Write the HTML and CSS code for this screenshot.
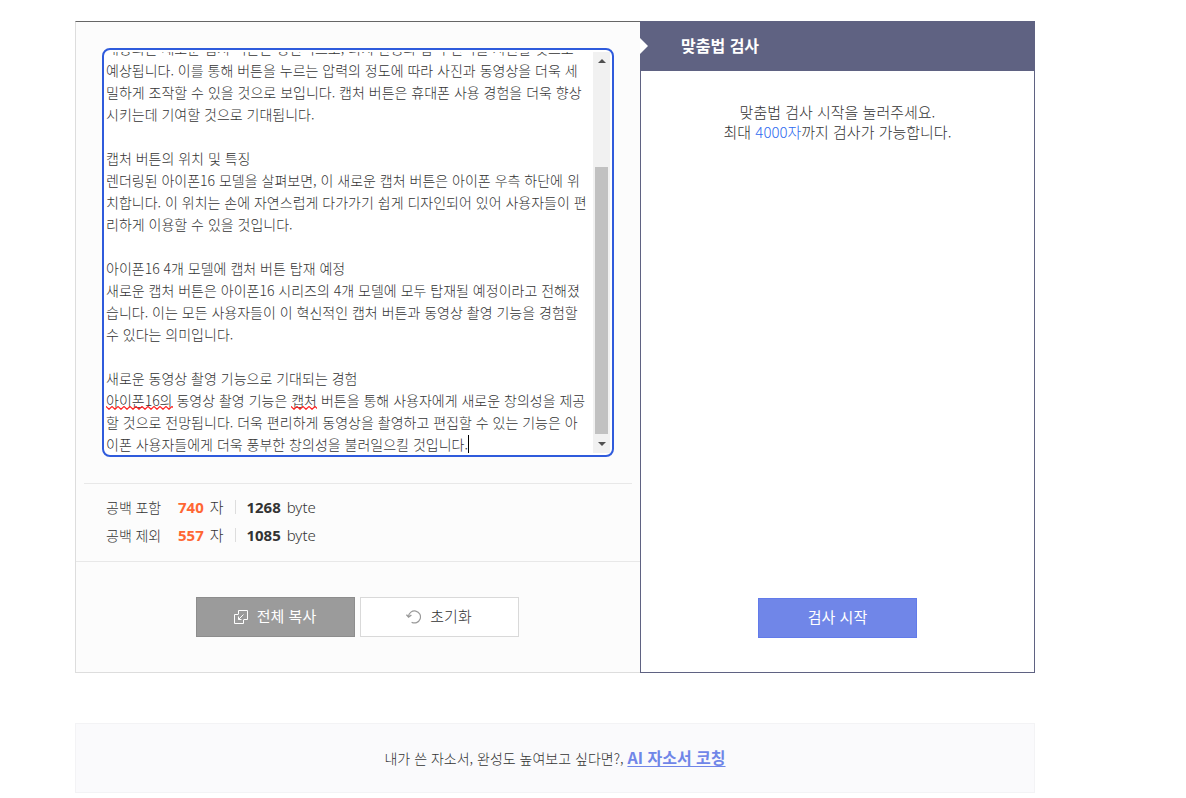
FILE: index.html
```html
<!DOCTYPE html>
<html lang="ko">
<head>
    <meta charset="UTF-8">
    <meta name="viewport" content="width=device-width, initial-scale=1">
    <title>맞춤법 검사</title>
    <link rel="stylesheet" href="styles.css">
</head>
<body>
    <main class="wrap">
        <div class="checker">
            <section class="write">
                <div class="editor">
                    <textarea class="editor-input" id="content" aria-label="내용" spellcheck="false" wrap="off">






내장되는 새로운 캡처 버튼은 정전식으로, 터치 반응과 압력 인식을 지원할 것으로
예상됩니다. 이를 통해 버튼을 누르는 압력의 정도에 따라 사진과 동영상을 더욱 세
밀하게 조작할 수 있을 것으로 보입니다. 캡처 버튼은 휴대폰 사용 경험을 더욱 향상
시키는데 기여할 것으로 기대됩니다.

캡처 버튼의 위치 및 특징
렌더링된 아이폰16 모델을 살펴보면, 이 새로운 캡처 버튼은 아이폰 우측 하단에 위
치합니다. 이 위치는 손에 자연스럽게 다가가기 쉽게 디자인되어 있어 사용자들이 편
리하게 이용할 수 있을 것입니다.

아이폰16 4개 모델에 캡처 버튼 탑재 예정
새로운 캡처 버튼은 아이폰16 시리즈의 4개 모델에 모두 탑재될 예정이라고 전해졌
습니다. 이는 모든 사용자들이 이 혁신적인 캡처 버튼과 동영상 촬영 기능을 경험할
수 있다는 의미입니다.

새로운 동영상 촬영 기능으로 기대되는 경험
아이폰16의 동영상 촬영 기능은 캡처 버튼을 통해 사용자에게 새로운 창의성을 제공
할 것으로 전망됩니다. 더욱 편리하게 동영상을 촬영하고 편집할 수 있는 기능은 아
이폰 사용자들에게 더욱 풍부한 창의성을 불러일으킬 것입니다.</textarea>
                    <div class="editor-marks" id="marks" aria-hidden="true"></div>
                    <div class="scrollbar" aria-hidden="true">
                        <svg width="8" height="4" viewBox="0 0 8 4"><path d="M0 4l4-4 4 4z"/></svg>
                        <div class="scroll-track" id="track"><div class="scroll-thumb" id="thumb"></div></div>
                        <svg width="8" height="4" viewBox="0 0 8 4"><path d="M0 0l4 4 4-4z"/></svg>
                    </div>
                </div>
                <div class="count">
                    <dl class="count-row">
                        <dt>공백 포함</dt>
                        <dd><strong class="num">740</strong> 자</dd>
                        <dd class="bytes"><strong>1268</strong> byte</dd>
                    </dl>
                    <dl class="count-row">
                        <dt>공백 제외</dt>
                        <dd><strong class="num">557</strong> 자</dd>
                        <dd class="bytes"><strong>1085</strong> byte</dd>
                    </dl>
                </div>
                <div class="actions">
                    <button type="button" class="btn btn-copy">
                        <svg width="14" height="14" viewBox="0 0 14 14" fill="none" stroke="currentColor" aria-hidden="true">
                            <path d="M4.5 4V.5h9v9H10"/>
                            <path d="M4.5 4.5h-4v9h9v-4"/>
                            <path d="M9.5 4.5l-5 5M4.5 6.5v3h3"/>
                        </svg>
                        전체 복사
                    </button>
                    <button type="button" class="btn btn-reset">
                        <svg width="15" height="14" viewBox="0 0 15 14" fill="none" stroke="currentColor" aria-hidden="true">
                            <path d="M2.5 6.5A6 6 0 1 1 5.6 12.2" stroke-width="1.2"/>
                            <path d="M.4 4.6l2.2 2.4 2.8-2" stroke-width="1.4"/>
                        </svg>
                        초기화
                    </button>
                </div>
            </section>

            <section class="result">
                <h2 class="result-title">맞춤법 검사</h2>
                <p class="guide">맞춤법 검사 시작을 눌러주세요.<br>최대 <em>4000자</em>까지 검사가 가능합니다.</p>
                <button type="button" class="btn btn-start">검사 시작</button>
            </section>
        </div>

        <div class="banner">
            내가 쓴 자소서, 완성도 높여보고 싶다면?, <a href="#">AI 자소서 코칭</a>
        </div>
    </main>
    <script src="editor.js"></script>
</body>
</html>
```
FILE: styles.css
```css
:root {
    --text: #333;
    --line: #ddd;
    --navy: #5f6282;
    --blue: #7086e8;
    --focus: #2f5bdc;
    --kr: "Noto Sans CJK KR", sans-serif;
}

* {
    box-sizing: border-box;
}

body {
    margin: 0;
    background: #fff;
    color: var(--text);
    font-family: var(--kr);
    font-size: 14px;
}

.wrap {
    max-width: 960px;
    margin: 21px 75px 5px;
}

.checker {
    display: grid;
    grid-template-columns: 565fr 395fr;
}

/* left: text box */
.write {
    background: #fcfcfc;
    border: 1px solid var(--line);
    border-top-color: #666;
    border-right: 0;
}

.editor {
    position: relative;
    margin: 28px;
}

.editor-input {
    display: block;
    width: 100%;
    height: 405px;
    margin: 0;
    padding: 0;
    border: 2px solid #fff;
    border-bottom: 0;
    border-radius: 6px;
    background: #fff;
    color: var(--text);
    font: 300 14px/22px var(--kr);
    white-space: pre;
    outline: 2px solid var(--focus);
    resize: none;
    overflow-x: hidden;
    overflow-y: scroll;
    scrollbar-width: none;
    caret-color: transparent;
}

/* spelling marks and caret, laid over the text */
.editor-marks {
    position: absolute;
    inset: 2px 2px 0;
    overflow: hidden;
    font: 300 14px/22px var(--kr);
    white-space: pre;
    pointer-events: none;
}

.mark {
    position: absolute;
    height: 4px;
    margin-top: 17px;
    background: url("data:image/svg+xml,%3Csvg xmlns='http://www.w3.org/2000/svg' width='6' height='4'%3E%3Cpath d='M-1 .5L0 .5L3 3.3L6 .5L7 .5' fill='none' stroke='%23f22' stroke-width='1.2'/%3E%3C/svg%3E") repeat-x;
}

.caret {
    position: absolute;
    width: 1px;
    height: 18px;
    margin-top: 2px;
    background: #000;
}

.scrollbar {
    position: absolute;
    top: 2px;
    right: 2px;
    bottom: 2px;
    display: flex;
    flex-direction: column;
    align-items: center;
    width: 17px;
    padding: 7px 0;
    background: #f1f1f1;
    fill: #505050;
}

.scroll-track {
    flex: 1;
    width: 13px;
    margin: 6px 0 8px;
}

.scroll-thumb {
    background: #c1c1c1;
}

/* counts */
.count {
    margin: 0 8px;
    padding: 9px 22px 12px;
    border-top: 1px solid #e8e8e8;
}

.count-row {
    display: flex;
    align-items: baseline;
    margin: 0;
    height: 28px;
    font-family: "Noto Sans", var(--kr);
    font-size: 15px;
    font-weight: 300;
    line-height: 28px;
}

.count-row dt {
    width: 72px;
    font-size: 14px;
}

.count-row dd {
    margin: 0;
}

.count-row strong {
    margin-right: 2px;
    font-weight: 700;
}

.count-row .num {
    color: #f63;
}

.count-row .bytes {
    margin-left: 12px;
    padding-left: 10px;
    border-left: 1px solid var(--line);
    line-height: 14px;
}

/* buttons */
.actions {
    display: flex;
    justify-content: center;
    gap: 5px;
    padding: 35px 2px 35px 0;
    border-top: 1px solid #e8e8e8;
}

.btn {
    display: flex;
    align-items: center;
    justify-content: center;
    gap: 9px;
    width: 159px;
    height: 40px;
    padding: 0 0 2px;
    border: 1px solid;
    font: 300 15px/20px var(--kr);
    cursor: pointer;
}

.btn svg {
    margin-top: 2px;
}

.btn-copy {
    background: #9b9b9b;
    border-color: #8d8d8d;
    color: #fff;
    font-weight: 400;
}

.btn-reset {
    background: #fff;
    border-color: #d9d9d9;
    color: var(--text);
}

.btn-reset svg {
    color: #999;
}

/* right: result */
.result {
    position: relative;
    display: flex;
    flex-direction: column;
    align-items: center;
    border: 1px solid var(--navy);
    border-top: 0;
}

.result-title {
    align-self: stretch;
    margin: 0;
    padding: 0 0 2px 40px;
    background: var(--navy);
    color: #fff;
    font-size: 16px;
    font-weight: 700;
    line-height: 48px;
}

.result-title::before {
    content: "";
    position: absolute;
    top: 17px;
    left: -1px;
    border: solid transparent;
    border-width: 8px 0 8px 8px;
    border-left-color: #fff;
}

.guide {
    margin: 31px 0 auto;
    font-size: 15px;
    font-weight: 300;
    line-height: 20px;
    text-align: center;
}

.guide em {
    color: #2f6bf0;
    font-style: normal;
}

.btn-start {
    margin-bottom: 34px;
    background: var(--blue);
    border-color: #627bea;
    color: #fff;
    font-weight: 400;
}

.banner {
    margin-top: 50px;
    padding: 24px 0;
    background: #fafafc;
    border: 1px solid #f3f3f5;
    font-weight: 300;
    line-height: 20px;
    text-align: center;
}

.banner a {
    color: var(--blue);
    font-size: 16px;
    font-weight: 700;
    line-height: 16px;
    text-underline-offset: 2px;
}
```
FILE: editor.js
```js
const LINE_HEIGHT = 22;

const input = document.getElementById('content');
const marks = document.getElementById('marks');
const track = document.getElementById('track');
const thumb = document.getElementById('thumb');
const misspelled = /아이폰16의(?= 동영상)|캡처(?= 버튼을)/g;

function textWidth(text) {
    const ruler = document.createElement('span');
    ruler.textContent = text;
    marks.append(ruler);
    const width = ruler.getBoundingClientRect().width;
    ruler.remove();
    return width;
}

function place(className, line, left, width) {
    const el = document.createElement('span');
    el.className = className;
    el.style.top = `${line * LINE_HEIGHT - input.scrollTop}px`;
    el.style.left = `${Math.round(left)}px`;
    if (width) el.style.width = `${Math.round(width)}px`;
    marks.append(el);
}

function draw() {
    marks.replaceChildren();
    input.value.split('\n').forEach((text, line) => {
        for (const match of text.matchAll(misspelled)) {
            place('mark', line, textWidth(text.slice(0, match.index)), textWidth(match[0]));
        }
    });

    const before = input.value.slice(0, input.selectionEnd).split('\n');
    place('caret', before.length - 1, textWidth(before.at(-1)));

    const scale = track.clientHeight / input.scrollHeight;
    thumb.style.height = `${Math.round(input.clientHeight * scale)}px`;
    thumb.style.marginTop = `${Math.round(input.scrollTop * scale)}px`;
}

input.addEventListener('input', draw);
input.addEventListener('scroll', draw);
document.addEventListener('selectionchange', draw);

input.setSelectionRange(input.value.length, input.value.length);
input.scrollTop = input.scrollHeight;
draw();
```
